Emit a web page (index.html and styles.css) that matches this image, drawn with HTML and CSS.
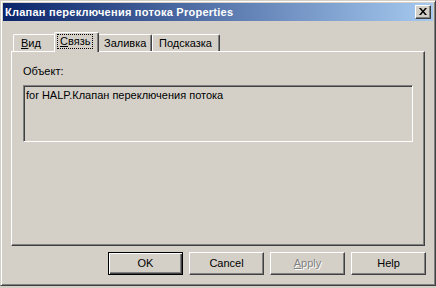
FILE: index.html
```html
<!DOCTYPE html>
<html>
<head>
<meta charset="utf-8">
<link rel="stylesheet" href="styles.css">
</head>
<body>
<div class="window">
  <div class="titlebar">
    <span class="title">Клапан переключения потока Properties</span>
    <div class="close">
      <svg width="8" height="7" viewBox="0 0 8 7"><path d="M0 0h2l2 2.5L6 0h2L5 3.5 8 7H6L4 4.5 2 7H0l3-3.5z" fill="#000"/></svg>
    </div>
  </div>
  <div class="content">
    <div class="tabs">
      <div class="tab t-vid"><u>В</u>ид</div>
      <div class="tab sel t-svyaz"><span class="focus"><u>С</u>вязь</span></div>
      <div class="tab t-zal">Заливка</div>
      <div class="tab t-pod">Подсказка</div>
    </div>
    <div class="panel">
      <div class="label">Объект:</div>
      <div class="field">for HALP.Клапан переключения потока</div>
    </div>
    <div class="buttons">
      <div class="btn default"><span>OK</span></div>
      <div class="btn"><span>Cancel</span></div>
      <div class="btn disabled"><span><u>A</u>pply</span></div>
      <div class="btn"><span>Help</span></div>
    </div>
  </div>
</div>
</body>
</html>
```
FILE: styles.css
```css
html, body {
  margin: 0;
  padding: 0;
  background: #d4d0c8;
}
body {
  font-family: "Liberation Sans", Arial, sans-serif;
  font-size: 11px;
  color: #000;
}
.window {
  box-sizing: border-box;
  width: 436px;
  height: 286px;
  border: 1px solid;
  border-color: #d4d0c8 #404040 #404040 #d4d0c8;
  box-shadow: inset 1px 1px #fff, inset -1px -1px #808080;
  padding: 2px;
  background: #d4d0c8;
}
.titlebar {
  height: 18px;
  display: flex;
  align-items: center;
  justify-content: space-between;
  padding: 0 2px 0 2px;
  background: linear-gradient(to right, #0a246a, #a6caf0);
}
.title {
  color: #fff;
  font-weight: bold;
  font-size: 11px;
  letter-spacing: 0.25px;
}
.close {
  box-sizing: border-box;
  width: 16px;
  height: 14px;
  background: #d4d0c8;
  border: 1px solid;
  border-color: #fff #404040 #404040 #fff;
  box-shadow: inset -1px -1px #808080;
  display: flex;
  align-items: center;
  justify-content: center;
  padding: 0 1px 1px 0;
}
.close svg { display: block; }
.content {
  padding: 11px 8px 0 8px;
}
.tabs {
  display: flex;
  align-items: flex-end;
  height: 19px;
  padding-left: 2px;
}
.tab {
  box-sizing: border-box;
  height: 17px;
  border-top: 1px solid #fff;
  border-left: 1px solid #fff;
  border-right: 1px solid #404040;
  box-shadow: inset -1px 0 #808080;
  border-radius: 2px 2px 0 0;
  padding: 2px 0 0 6px;
  line-height: 13px;
  white-space: nowrap;
}
.t-vid { width: 43px; padding-left: 7px; }
.t-svyaz { width: 41px; }
.t-zal { width: 55px; }
.t-pod { width: 68px; }
.tab.sel {
  position: relative;
  z-index: 1;
  height: 20px;
  width: 45px;
  margin: 0 -2px -1px -2px;
  background: #d4d0c8;
  padding: 2px 0 0 3px;
}
.focus {
  display: inline-block;
  outline: 1px dotted #000;
  padding: 0 2px 0 2px;
  line-height: 13px;
}
.panel {
  box-sizing: border-box;
  height: 195px;
  border: 1px solid;
  border-color: #fff #404040 #404040 #fff;
  box-shadow: inset -1px -1px #808080;
  padding: 13px 11px 0 11px;
}
.label {
  line-height: 13px;
}
.field {
  box-sizing: border-box;
  margin-top: 7px;
  height: 57px;
  border: 1px solid;
  border-color: #808080 #fff #fff #808080;
  box-shadow: inset 1px 1px #404040;
  padding: 3px 2px 2px;
  line-height: 13px;
}
.buttons {
  display: flex;
  justify-content: flex-end;
  gap: 6px;
  margin-top: 6px;
  margin-right: -1px;
}
.btn {
  box-sizing: border-box;
  width: 75px;
  height: 23px;
  border: 1px solid;
  border-color: #fff #404040 #404040 #fff;
  box-shadow: inset -1px -1px #808080;
  display: flex;
  align-items: center;
  justify-content: center;
  line-height: 13px;
}
.btn.default {
  border: 1px solid #000;
  box-shadow: inset 1px 1px #fff, inset -1px -1px #404040, inset -2px -2px #808080;
}
.btn.disabled span {
  color: #808080;
  text-shadow: 1px 1px #fff;
}
```
